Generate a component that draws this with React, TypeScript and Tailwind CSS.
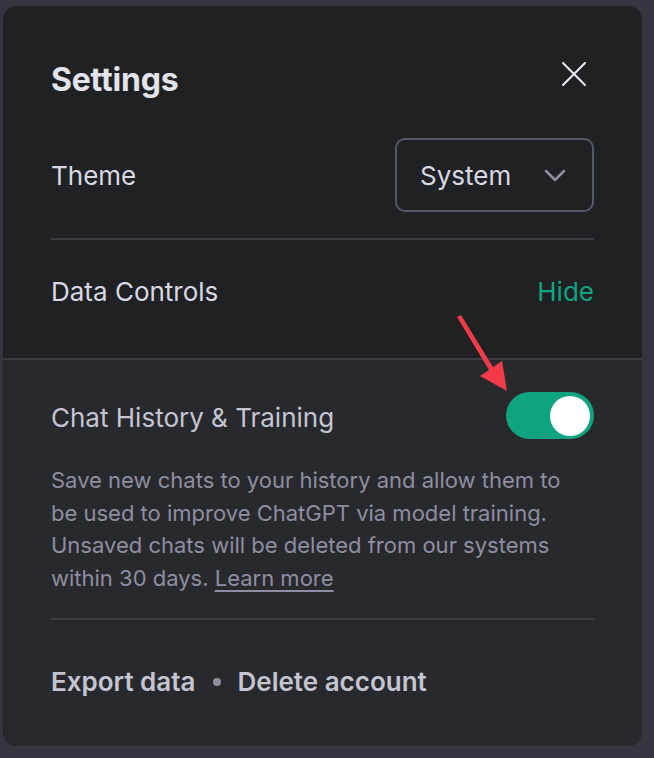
function Divider() {
  return <div className="mx-12 h-[2px] bg-[#3b3c44]" />;
}

export default function App() {
  return (
    <div
      className="relative h-[758px] w-[654px] overflow-hidden bg-[#343541] pb-[12px] pl-[3px] pr-[12px] pt-[6px]"
      style={{ fontFamily: 'Inter, "Noto Sans", sans-serif' }}
    >
      <div className="flex h-[740px] flex-col overflow-hidden rounded-[14px] bg-[#202123]">
        <header className="flex items-start justify-between px-12 pt-[54px]">
          <h1 className="text-[32px] font-bold leading-10 tracking-[-0.2px] text-[#e3e3ea]">Settings</h1>
          <button className="mr-[8px] mt-[2px] text-[#ececf1]">
            <svg width="24" height="24" viewBox="0 0 24 24" fill="none" stroke="currentColor" strokeWidth="2" strokeLinecap="round">
              <path d="M1 1 L23 23 M23 1 L1 23" />
            </svg>
          </button>
        </header>

        <div className="mt-[38px] flex items-center justify-between px-12">
          <span className="text-[26px] text-[#d9d9e3]">Theme</span>
          <button className="flex h-[74px] w-[199px] items-center justify-between rounded-[10px] border-2 border-[#565869] pl-[23px] pr-[26px] text-[26px] text-[#d9d9e3]">
            System
            <svg width="22" height="13" viewBox="0 0 22 13" fill="none" stroke="#8e8ea0" strokeWidth="2.5" strokeLinecap="round" strokeLinejoin="round">
              <path d="M2 2 L11 11 L20 2" />
            </svg>
          </button>
        </div>

        <div className="mt-[26px]">
          <Divider />
        </div>

        <div className="flex items-center justify-between px-12 pb-[50px] pt-[36px]">
          <span className="text-[26px] leading-8 text-[#d9d9e3]">Data Controls</span>
          <button className="text-[26px] leading-8 text-[#10a37f]">Hide</button>
        </div>

        <div className="h-[2px] bg-[#3b3c44]" />

        <div className="flex flex-1 flex-col bg-[#28292d]">
          <div className="flex items-center justify-between px-12 pt-[32px]">
            <span className="mt-[3px] text-[26px] text-[#c5c5d2]">Chat History &amp; Training</span>
            <div className="flex h-[47px] w-[88px] items-center justify-end rounded-full bg-[#10a37f] pr-[4px]">
              <div className="h-[40px] w-[40px] rounded-full bg-white" />
            </div>
          </div>

          <p className="mt-[25px] w-[570px] pl-12 pr-[2px] text-[22px] leading-[32.5px] text-[#8e8ea0]">
            Save new chats to your history and allow them to be used to improve ChatGPT via model training. Unsaved
            chats will be deleted from our systems within 30 days.{' '}
            <a className="underline underline-offset-4">Learn more</a>
          </p>

          <div className="mt-[24px]">
            <Divider />
          </div>

          <div className="flex items-center gap-[17px] px-12 pt-[42px] text-[26px] font-semibold text-[#c5c5d2]">
            <span>Export data</span>
            <span className="h-[8px] w-[8px] rounded-full bg-[#8e8ea0]" />
            <span>Delete account</span>
          </div>
        </div>
      </div>

      <svg className="pointer-events-none absolute left-0 top-0" width="654" height="758">
        <polygon points="457,317 461,315 493,367 502,361 507,391 480,376 489,370" fill="#f23a48" />
      </svg>
    </div>
  );
}
